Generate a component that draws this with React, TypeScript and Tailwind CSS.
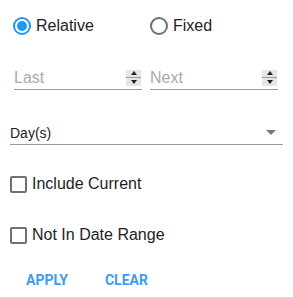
import React, { useState } from "react";

function Radio({ checked }: { checked: boolean }) {
  return (
    <span
      className={`flex h-[18px] w-[18px] items-center justify-center rounded-full border-2 ${
        checked ? "border-[#2196f3]" : "border-[#6f6f6f]"
      }`}
    >
      {checked && <span className="h-[10px] w-[10px] rounded-full bg-[#2196f3]" />}
    </span>
  );
}

function Spinner() {
  return (
    <span className="flex h-[16px] w-[15px] flex-col bg-[#e6e6e6]">
      <span className="flex flex-1 items-center justify-center border-b border-[#9a9a9a]">
        <span className="h-0 w-0 border-x-[3px] border-b-[4px] border-x-transparent border-b-[#222]" />
      </span>
      <span className="flex flex-1 items-center justify-center">
        <span className="h-0 w-0 border-x-[3px] border-t-[4px] border-x-transparent border-t-[#222]" />
      </span>
    </span>
  );
}

function NumberField({ placeholder }: { placeholder: string }) {
  return (
    <div className="flex h-[22px] w-[128px] items-center justify-between border-b border-[#9a9a9a] pb-[2px]">
      <span className="text-[16px] leading-[20px] text-[#aaaaaa]">{placeholder}</span>
      <span className="mr-[1px]">
        <Spinner />
      </span>
    </div>
  );
}

function Check({ label }: { label: string }) {
  return (
    <div className="flex items-center gap-[5px]">
      <span className="h-[17px] w-[17px] rounded-[2px] border-2 border-[#707070]" />
      <span className="text-[16px] leading-[20px] text-[#222]">{label}</span>
    </div>
  );
}

export default function App() {
  const [mode] = useState<"relative" | "fixed">("relative");

  return (
    <div className="h-[297px] w-[293px] overflow-hidden bg-white font-['Liberation_Sans',Arial,sans-serif]">
      <div className="flex items-center pl-[13px] pt-[16px]">
        <div className="flex w-[137px] items-center gap-[5px]">
          <Radio checked={mode === "relative"} />
          <span className="text-[16px] leading-[20px] text-[#222]">Relative</span>
        </div>
        <div className="flex items-center gap-[5px]">
          <Radio checked={mode === "fixed"} />
          <span className="text-[16px] leading-[20px] text-[#222]">Fixed</span>
        </div>
      </div>

      <div className="mt-[32px] flex gap-[8px] pl-[14px]">
        <NumberField placeholder="Last" />
        <NumberField placeholder="Next" />
      </div>

      <div className="ml-[10px] mt-[31px] flex h-[24px] w-[273px] items-center justify-between border-b border-[#9a9a9a]">
        <span className="text-[14px] leading-[18px] text-[#222]">Day(s)</span>
        <span className="mr-[7px] h-0 w-0 border-x-[5px] border-t-[5px] border-x-transparent border-t-[#777]" />
      </div>

      <div className="ml-[10px] mt-[29px] flex flex-col gap-[31px]">
        <Check label="Include Current" />
        <Check label="Not In Date Range" />
      </div>

      <div className="mt-[27px] flex gap-[37px] pl-[26px] font-['Roboto',sans-serif] text-[14px] font-bold leading-[16px] text-[#3d9cf1]">
        <button type="button">APPLY</button>
        <button type="button">CLEAR</button>
      </div>
    </div>
  );
}
